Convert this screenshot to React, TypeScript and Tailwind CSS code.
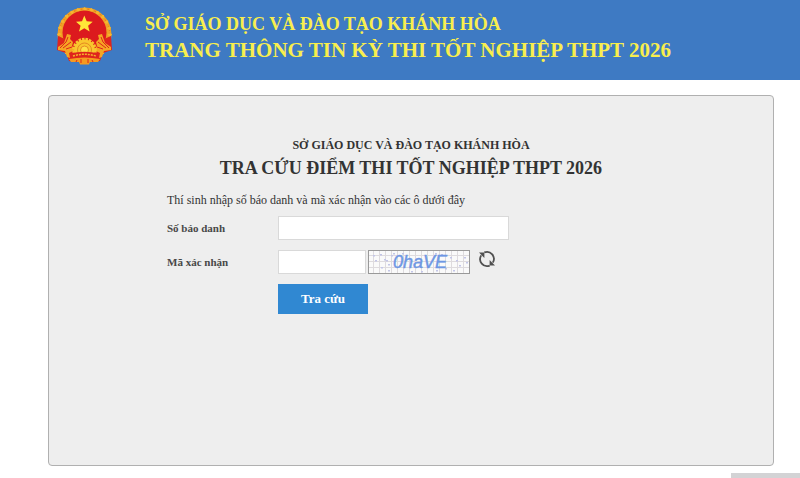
import { useState, type FormEvent } from 'react';

const POINTS = Array.from({ length: 24 }, (_, i) => i * 15);

const SPECKS = [
  [4, 4], [11, 3], [6, 9], [15, 8], [22, 4], [19, 13], [12, 16], [17, 9], [19, 19],
  [30, 14], [24, 2], [52, 20], [66, 2], [72, 3], [76, 17], [81, 6], [87, 9], [90, 14],
  [95, 6], [97, 11], [84, 19], [42, 20], [67, 19], [33, 2],
];

function Emblem() {
  return (
    <svg viewBox="0 0 70 75" className="h-[75px] w-[70px] shrink-0" role="img" aria-label="Quốc huy Việt Nam">
      {/* Wreath */}
      <circle cx="34.5" cy="34.5" r="27" fill="#f0a024" />
      <circle cx="34.5" cy="34.5" r="25.5" fill="none" stroke="#e0701e" strokeWidth="1" strokeDasharray="1.5 2" />
      {POINTS.map((angle) => (
        <path key={angle} d="M33 8.5 L34.5 7 L37 9 L34.5 11.5 Z" fill="#f6b52e" transform={`rotate(${angle} 34.5 34.5)`} />
      ))}
      <circle cx="34.5" cy="32.5" r="22" fill="#dc1a1e" />
      {/* Star */}
      <path d="M34.3 15.5 L36.7 21.3 L42.7 21.8 L38.1 25.7 L39.6 31.5 L34.3 28.3 L29 31.5 L30.6 25.7 L26 21.8 L32 21.3 Z" fill="#ffe638" />
      {/* Gathered stalks and ribbon folds */}
      <path d="M8 36 L15 39 L20 50 L34.5 55 L49 50 L54 39 L61 36 L62 50 L53 53 L50 61 L40 62 L34.5 64 L29 62 L19 61 L16 53 L7 50 Z" fill="#df241d" />
      <g fill="#f5a623">
        <path d="M17 34 L21 35 L20 39 L23 42 L22 46 L25 50 L19 53 L20 58 L17 57 L15 51 L8 50 L8 47 L14 43 Z" />
        <path d="M52 34 L48 35 L49 39 L46 42 L47 46 L44 50 L50 53 L49 58 L52 57 L54 51 L61 50 L61 47 L55 43 Z" />
      </g>
      <g fill="none" stroke="#df241d" strokeWidth="1">
        <path d="M18 37 L16 42 L10 48 M21 42 L13 48 M22 47 L16 49" />
        <path d="M51 37 L53 42 L59 48 M48 42 L56 48 M47 47 L53 49" />
      </g>
      {/* Gear wheel */}
      <circle cx="34.5" cy="50" r="11" fill="none" stroke="#f8c52d" strokeWidth="2.5" strokeDasharray="2.5 1" />
      <circle cx="34.5" cy="50" r="10.5" fill="#f9c72e" />
      <circle cx="34.5" cy="50" r="7" fill="none" stroke="#e58a22" strokeWidth="1" />
      <circle cx="34.5" cy="50" r="4" fill="#ffdf45" stroke="#e58a22" strokeWidth="1" />
      <path d="M20 53.5 Q34.5 50 49 53.5 L49 60 Q34.5 56 20 60 Z" fill="#df241d" />
      <path d="M23 56 Q34.5 52.5 46 56" fill="none" stroke="#f5b429" strokeWidth="1.5" strokeDasharray="2 1" />
      <path d="M19 59 Q34.5 56 50 59 L48 62 L40 62 L39 64.5 L30 64.5 L29 62 L21 62 Z" fill="#f59a20" />
      <path d="M27 60 L26 62 M31 59 L31 63 M38 59 L38 63 M42 60 L43 62" stroke="#df241d" strokeWidth="1" />
    </svg>
  );
}

function Captcha() {
  return (
    <svg viewBox="0 0 100 22" className="h-6 w-[102px] shrink-0 border border-[#999999] bg-[#fafafa]" role="img" aria-label="Mã xác nhận">
      <defs>
        <pattern id="captcha-grid" width="6" height="6" patternUnits="userSpaceOnUse">
          <path d="M4.5 0 V6 M0 4.5 H6" stroke="#dedbde" strokeWidth="1" />
        </pattern>
      </defs>
      <rect width="100" height="22" fill="url(#captcha-grid)" />
      {SPECKS.map(([x, y], i) => (
        <rect key={i} x={x} y={y} width="2" height="1.5" fill="#c3c6e8" />
      ))}
      <text
        x="24"
        y="17"
        fontFamily="Liberation Sans, sans-serif"
        fontStyle="italic"
        fontSize="18"
        fill="#6e97e4"
        stroke="#6e97e4"
        strokeWidth="0.4"
      >
        0haVE
      </text>
    </svg>
  );
}

function RefreshIcon() {
  return (
    <svg viewBox="0 0 18 18" className="size-[18px]" fill="none" aria-hidden="true">
      <path d="M6.3 2.4 A7 7 0 0 1 14.8 12.6" stroke="#505050" strokeWidth="1.8" />
      <path d="M11.7 15.6 A7 7 0 0 1 3.2 5.4" stroke="#505050" strokeWidth="1.8" />
      <path d="M1 2.6 H6.4 V8 Z" fill="#505050" />
      <path d="M17 15.4 H11.6 V10 Z" fill="#505050" />
    </svg>
  );
}

export default function App() {
  const [candidate, setCandidate] = useState('');
  const [code, setCode] = useState('');

  const handleSubmit = (e: FormEvent) => e.preventDefault();

  return (
    <div className="min-h-screen bg-white font-['Liberation_Serif',serif] text-[#333333]">
      <header className="flex h-20 items-start bg-[#3e7ac3] pl-[50px] font-bold text-[#f8ee4e]">
        <Emblem />
        <div className="ml-[25px] pt-3">
          <p className="text-[18px] leading-6">SỞ GIÁO DỤC VÀ ĐÀO TẠO KHÁNH HÒA</p>
          <p className="text-[21px] leading-7">TRANG THÔNG TIN KỲ THI TỐT NGHIỆP THPT 2026</p>
        </div>
      </header>

      <main className="mt-[15px] mr-[26px] ml-12 rounded border border-[#b0b0b0] bg-[#eeeeee] px-6 pt-10 pb-[151px]">
        <div className="mx-auto max-w-[488px]">
          <div className="text-center font-bold">
            <p className="text-[12px] leading-[18px]">SỞ GIÁO DỤC VÀ ĐÀO TẠO KHÁNH HÒA</p>
            <h1 className="text-[18px] leading-7">TRA CỨU ĐIỂM THI TỐT NGHIỆP THPT 2026</h1>
          </div>

          <p className="mt-2 text-[12px] leading-5">
            Thí sinh nhập số báo danh và mã xác nhận vào các ô dưới đây
          </p>

          <form onSubmit={handleSubmit} className="mt-[6px] grid grid-cols-[111px_1fr] items-center gap-y-[10px]">
            <label htmlFor="candidate" className="text-[11px] font-bold text-[#484848]">Số báo danh</label>
            <input
              id="candidate"
              type="text"
              value={candidate}
              onChange={(e) => setCandidate(e.target.value)}
              className="h-6 w-[231px] border border-[#d9d9d9] bg-white px-2 text-[12px]"
            />

            <label htmlFor="code" className="text-[11px] font-bold text-[#484848]">Mã xác nhận</label>
            <div className="flex h-6 items-start">
              <input
                id="code"
                type="text"
                value={code}
                onChange={(e) => setCode(e.target.value)}
                className="mr-[2px] h-6 w-[88px] border border-[#d9d9d9] bg-white px-2 text-[12px]"
              />
              <Captcha />
              <button type="button" aria-label="Đổi mã xác nhận" className="ml-2">
                <RefreshIcon />
              </button>
            </div>

            <button type="submit" className="col-start-2 h-[30px] w-[90px] bg-[#3088d2] text-[13px] font-bold text-white">
              Tra cứu
            </button>
          </form>
        </div>
      </main>

      <div className="fixed right-0 bottom-0 h-[5px] w-[69px] bg-[#d3d3d5]" aria-hidden="true" />
    </div>
  );
}
